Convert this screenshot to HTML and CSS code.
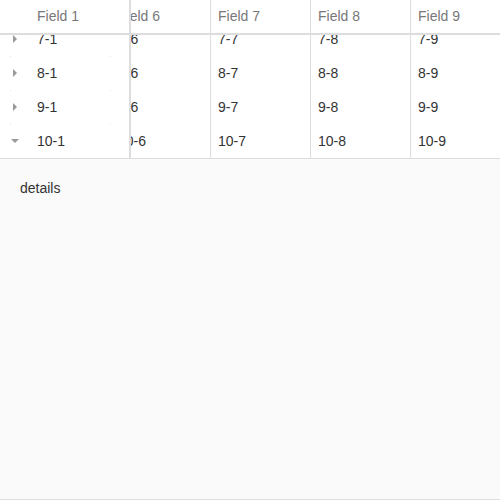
FILE: index.html
```html
<!DOCTYPE html>
<html>
<head>
<meta charset="utf-8">
<link rel="stylesheet" href="styles.css">
</head>
<body>
<div class="grid">
  <div class="header">
    <div class="pinned"><div class="hcell first">Field 1</div></div>
    <div class="center">
      <div class="track">
        <div class="hcell col">Field 6</div>
        <div class="hcell col">Field 7</div>
        <div class="hcell col">Field 8</div>
        <div class="hcell col">Field 9</div>
      </div>
    </div>
  </div>
  <div class="body">
    <div class="pinned">
      <div class="rows">
        <div class="row prow"><span class="exp right"></span><span>7-1</span></div>
        <div class="row prow"><span class="exp right"></span><span>8-1</span></div>
        <div class="row prow"><span class="exp right"></span><span>9-1</span></div>
        <div class="row prow"><span class="exp down"></span><span>10-1</span></div>
      </div>
    </div>
    <div class="center">
      <div class="rows track-col">
        <div class="row track"><div class="col">7-6</div><div class="col">7-7</div><div class="col">7-8</div><div class="col">7-9</div></div>
        <div class="row track"><div class="col">8-6</div><div class="col">8-7</div><div class="col">8-8</div><div class="col">8-9</div></div>
        <div class="row track"><div class="col">9-6</div><div class="col">9-7</div><div class="col">9-8</div><div class="col">9-9</div></div>
        <div class="row track"><div class="col">10-6</div><div class="col">10-7</div><div class="col">10-8</div><div class="col">10-9</div></div>
      </div>
    </div>
  </div>
</div>
<div class="details">details</div>
</body>
</html>
```
FILE: styles.css
```css
* { box-sizing: border-box; }
html, body { margin: 0; padding: 0; }
body {
  width: 500px;
  height: 500px;
  overflow: hidden;
  font-family: "Liberation Sans", Arial, sans-serif;
  font-size: 14px;
  color: #333;
  background: #fff;
}
.grid {
  display: flex;
  flex-direction: column;
  border-bottom: 1px solid #dddddd;
}
.header {
  display: flex;
  height: 35px;
  border-bottom: 2px solid #dddddd;
  color: #777;
}
.pinned {
  flex: none;
  width: 131px;
  border-right: 2px solid #dddddd;
  overflow: hidden;
}
.center {
  flex: 1;
  overflow: hidden;
}
.track {
  display: flex;
  margin-left: -20px;
}
.hcell {
  height: 33px;
  line-height: 32px;
  white-space: nowrap;
}
.first { padding-left: 37px; }
.col {
  flex: none;
  width: 100px;
  padding-left: 7px;
  border-right: 1px solid #dddddd;
  white-space: nowrap;
  overflow: hidden;
}
.body {
  display: flex;
  height: 123px;
  overflow: hidden;
}
.rows {
  margin-top: -13px;
}
.row {
  height: 34px;
  line-height: 34px;
}
.prow {
  position: relative;
  display: flex;
  align-items: center;
  padding-left: 11px;
}
.prow::before, .prow::after {
  content: "";
  position: absolute;
  top: 0;
  width: 1px;
  height: 1px;
  background: #e4e4e4;
}
.prow::before { left: 10px; }
.prow::after { left: 110px; }
.prow:first-child::before, .prow:first-child::after { display: none; }
.exp {
  flex: none;
  width: 8px;
  height: 8px;
  margin-right: 18px;
  position: relative;
}
.exp.right::before {
  content: "";
  position: absolute;
  left: 2px;
  top: 0;
  border-style: solid;
  border-width: 4px 0 4px 4px;
  border-color: transparent transparent transparent #999;
}
.exp.down::before {
  content: "";
  position: absolute;
  left: 0;
  top: 2px;
  border-style: solid;
  border-width: 4px 4px 0 4px;
  border-color: #999 transparent transparent transparent;
}
.details {
  height: 341px;
  background: #fafafa;
  border-bottom: 1px solid #dddddd;
  padding: 21px 20px 20px;
  line-height: 17px;
  color: #333;
}
```
